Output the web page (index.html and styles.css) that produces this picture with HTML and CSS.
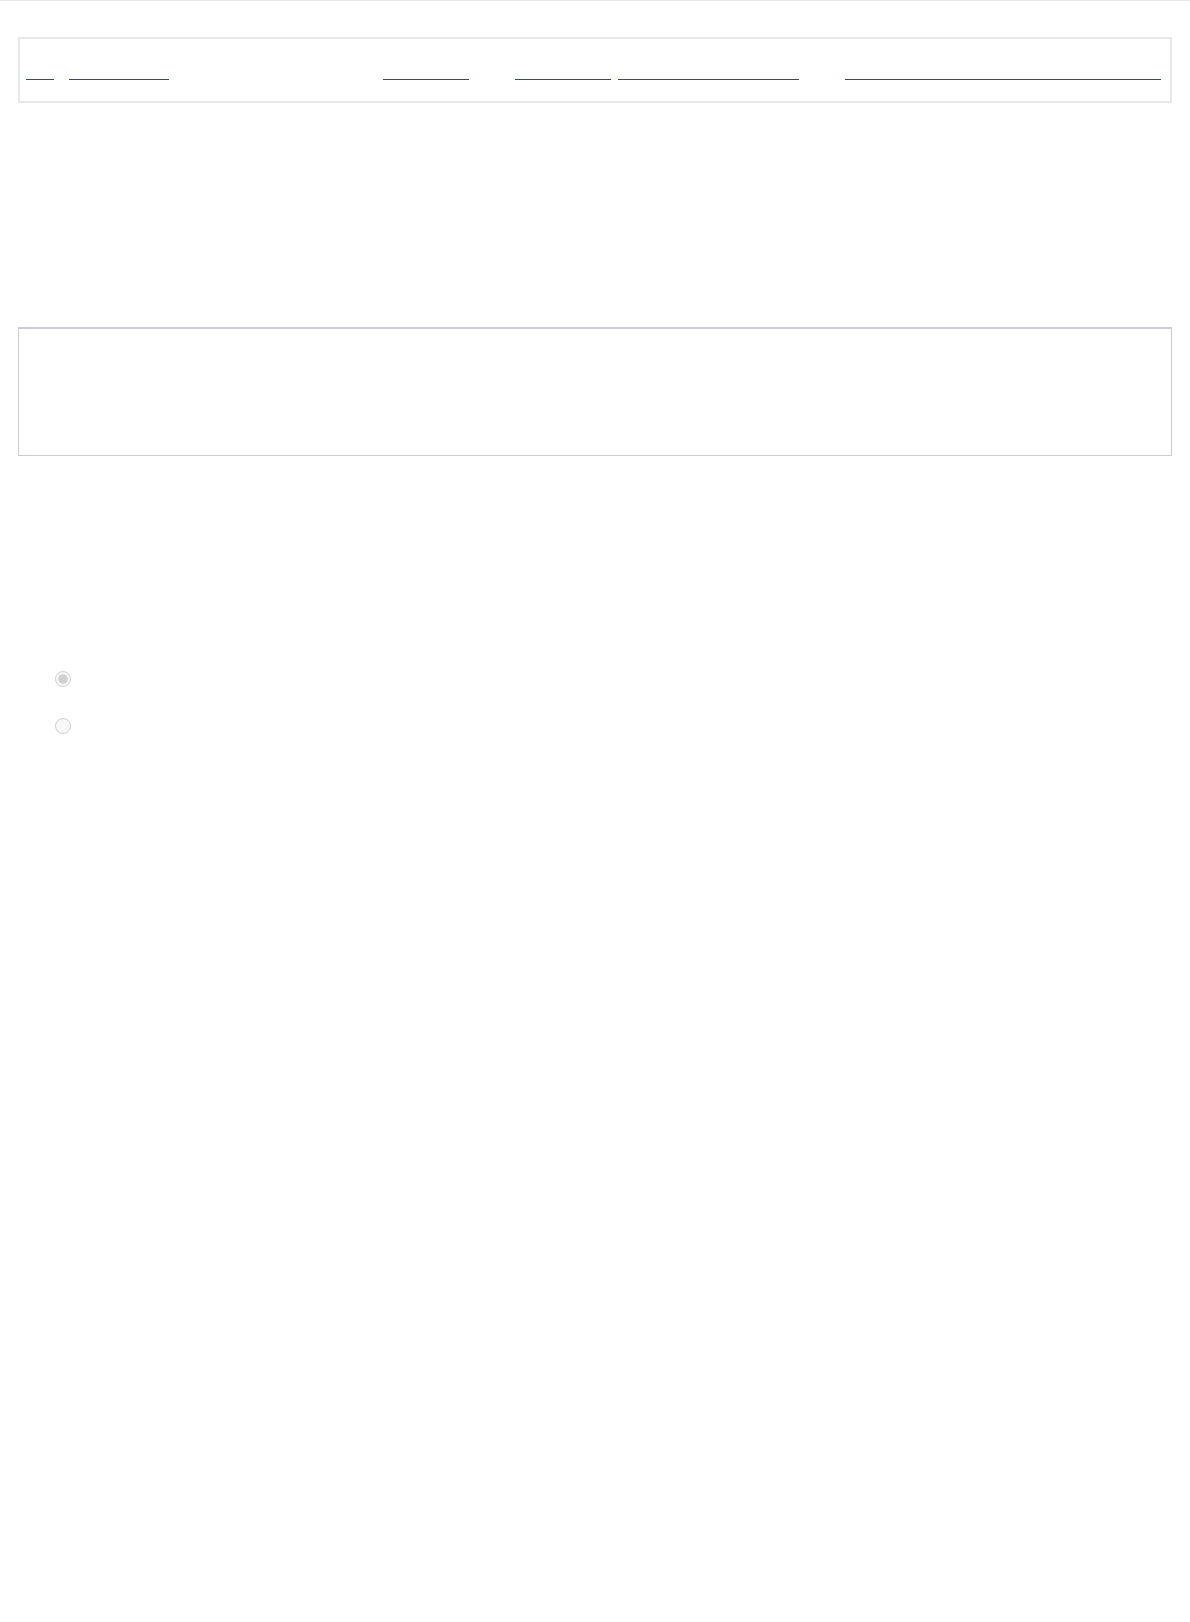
FILE: index.html
```html
<!DOCTYPE html>
<html lang="en">
<head>
  <meta charset="UTF-8" />
  <meta name="viewport" content="width=device-width, initial-scale=1" />
  <title>Settings</title>
  <link rel="stylesheet" href="styles.css">
</head>
<body>
  <div class="topbar"></div>
  <div class="page">
    <nav class="nav">
      <a class="nav-link w-home" href="#">Top</a>
      <a class="nav-link w-products" href="#">Products</a>
      <a class="nav-link w-pricing far" href="#">Pricing</a>
      <a class="nav-link w-support mid" href="#">Support</a>
      <a class="nav-link w-docs near" href="#">Documentation</a>
      <a class="nav-link w-contact mid" href="#">Contact our sales team</a>
    </nav>

    <div class="panel"></div>

    <form class="options">
      <label class="option"><input type="radio" name="mode" value="a" checked disabled></label>
      <label class="option"><input type="radio" name="mode" value="b" disabled></label>
    </form>
  </div>
</body>
</html>
```

FILE: styles.css
```css
body {
  font-family: 'Liberation Sans', Arial, sans-serif;
  background-color: #ffffff;
  margin: 0;
  font-size: 13px;
}
.topbar {
  border-top: 1px solid #e8e4e7;
}
.page {
  padding: 0 18px;
}
.nav {
  display: flex;
  align-items: flex-end;
  margin-top: 36px;
  height: 66px;
  padding: 0 6px 21px;
  box-sizing: border-box;
  border: 2px solid #e6e9ec;
}
.nav-link {
  display: block;
  height: 20px;
  line-height: 20px;
  overflow: hidden;
  white-space: nowrap;
  color: transparent;
  text-decoration: none;
  border-bottom: 1px solid #1f4c9a;
  margin-left: 15px;
}
.nav-link:first-child {
  margin-left: 0;
}
.nav-link.far {
  margin-left: 214px;
}
.nav-link.mid {
  margin-left: 46px;
}
.nav-link.near {
  margin-left: 7px;
}
.w-home { width: 28px; }
.w-products { width: 100px; }
.w-pricing { width: 86px; }
.w-support { width: 96px; }
.w-docs { width: 181px; }
.w-contact { width: 316px; }
.panel {
  margin-top: 224px;
  height: 126px;
  border: 1px solid #c8ccd4;
  border-top-width: 2px;
}
.options {
  display: flex;
  flex-direction: column;
  gap: 31px;
  margin-top: 215px;
  padding-left: 37px;
}
.option {
  display: flex;
  align-items: center;
}
.option input {
  width: 16px;
  height: 16px;
  margin: 0;
}
```
